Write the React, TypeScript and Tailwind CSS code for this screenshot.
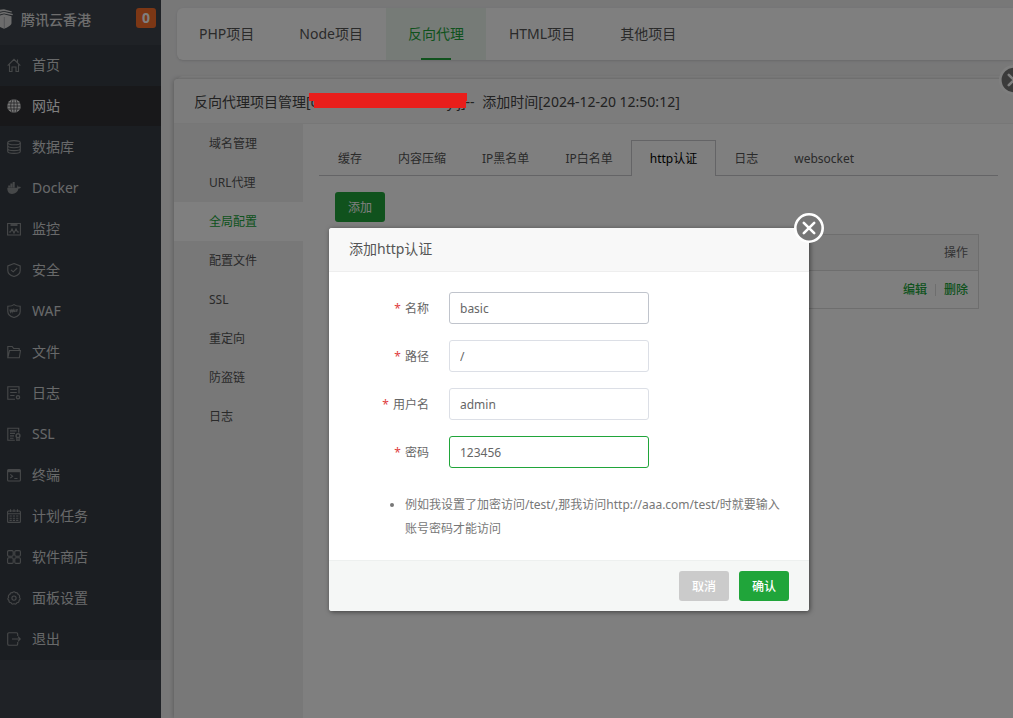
import { useState, type ReactNode } from 'react'

type IconKey =
  | 'home' | 'globe' | 'database' | 'docker' | 'monitor' | 'shield' | 'waf'
  | 'folder' | 'log' | 'ssl' | 'terminal' | 'calendar' | 'apps' | 'gear' | 'exit'

const ICONS: Record<IconKey, ReactNode> = {
  home: <path d="M.7 7.700 7 1.300l6.300 6.400M2.500 6.500v7H5V9h4v4.500h2.500v-7M10.500 1.500v3" />,
  globe: (
    <>
      <circle cx="7" cy="7" r="6.800" fill="currentColor" stroke="none" />
      <path
        d="M0 7h14M1 4h12M1 10h12M7 0v14M5 .6C3.300 4.500 3.300 9.500 5 13.400M9 .6c1.700 3.900 1.700 8.900 0 12.800"
        stroke="#323236"
        strokeWidth="0.7"
      />
    </>
  ),
  database: (
    <>
      <ellipse cx="7" cy="2.700" rx="6.300" ry="2.100" />
      <path d="M.7 2.700v8.600c0 1.200 2.800 2.100 6.300 2.100s6.300-.9 6.300-2.100V2.700M.7 5.600c0 1.200 2.800 2.100 6.300 2.100s6.300-.9 6.300-2.100M.7 8.500c0 1.200 2.800 2.100 6.300 2.100s6.300-.9 6.300-2.100" />
    </>
  ),
  docker: (
    <path
      d="M.3 6.800h9.500c.6-.4.7-1.400.3-2.600.9.3 1.400.9 1.500 1.700.8-.2 1.600 0 2.300.3-.4.9-1.200 1.400-2.300 1.400C10.600 11.300 8.300 13 5 13 1.800 13 .2 10.500.3 6.800ZM1.200 4.600h2v1.900h-2zM3.400 4.600h2v1.900h-2zM5.700 4.600h2v1.900h-2zM3.400 2.600h2v1.800h-2zM5.700 2.600h2v1.800h-2zM5.700 1h2v1.400h-2z"
      fill="currentColor"
      stroke="none"
    />
  ),
  monitor: (
    <>
      <path d="M.6 1.500h12.800v11.500H.6zM2 10h1.500L5 7l2 4 2-4 1.500 3H12" />
      <path d="M3.500 3h7" strokeWidth="1.800" />
    </>
  ),
  shield: <path d="M7 .6 13.200 3v4.500c0 2.700-2.700 5-6.200 6-3.500-1-6.200-3.300-6.200-6V3ZM4 6.800l2.200 2 4-3.800" />,
  waf: (
    <>
      <path d="M7 .6c1.500 1.200 3.800 1.700 6.200 1.700v5.200c0 2.700-2.700 5-6.200 6-3.500-1-6.200-3.300-6.200-6V2.300C3.200 2.300 5.500 1.800 7 .6Z" />
      <path d="m2.800 5.500.7 2.500.8-2 .8 2 .6-2.500M6 8l.9-2.500L7.800 8M9 8V5.700h2M9 7h1.500" />
    </>
  ),
  folder: <path d="M.8 12.800V1.500h4.400l1.500 2h5.500v2M.8 12.800l1.700-7.300h11l-1.200 7.300Z" />,
  log: (
    <>
      <path d="M12 7.500V.7H.8v12.600H8M3.200 3.500h6.600M3.200 6.500h6.600M3.200 9.500h4.300" />
      <circle cx="11" cy="11.200" r="1.600" strokeWidth="1.300" />
    </>
  ),
  ssl: (
    <>
      <path d="M11.700 5.500V1.200H.8v12h7M3 3.900h6.500M3 6.400h5M3 8.900h4M3 11.200h3.500" />
      <circle cx="11" cy="8.700" r="1.900" strokeWidth="1.400" />
      <path d="M9.800 10.600v3l1.200-.8 1.200.8v-3" />
    </>
  ),
  terminal: (
    <>
      <rect x=".6" y="1.500" width="12.800" height="11.500" rx="1" />
      <path d="M.6 3h12.800" strokeWidth="2.400" />
      <path d="m3.300 6.300 2.300 1.900-2.300 1.900M7.300 10.500h3.200" />
    </>
  ),
  calendar: (
    <>
      <rect x=".6" y="2" width="12.800" height="11.400" rx="1" />
      <path d="M.6 4.800h12.800M3.500.3V3M7 .3V3M10.500.3V3" />
      <path d="M2.500 7h9M2.500 9.200h9M2.500 11.400h9" strokeDasharray="2.300 1" />
    </>
  ),
  apps: (
    <>
      <rect x=".6" y=".6" width="5.600" height="5.600" rx="1.200" />
      <rect x="7.800" y=".6" width="5.600" height="5.600" rx="1.200" />
      <rect x=".6" y="7.800" width="5.600" height="5.600" rx="1.200" />
      <rect x="7.800" y="7.800" width="5.600" height="5.600" rx="1.200" />
    </>
  ),
  gear: (
    <>
      <path d="M5.500 1.700Q7-.2 8.500 1.700q2.400-.4 2.600 1.900 2.200.7 1.300 2.800 1.700 1.500-.3 2.800.2 2.400-2.200 2.500-1 2.200-2.900.9-2 1.300-2.900-.9-2.400-.1-2.200-2.500-2-1.300-.3-2.800-.9-2.100 1.300-2.800.2-2.300 2.600-1.900Z" />
      <circle cx="7" cy="7.100" r="2.100" />
    </>
  ),
  exit: <path d="M10.700 4V2A1.300 1.300 0 0 0 9.400.7H2A1.300 1.300 0 0 0 .7 2v10A1.300 1.300 0 0 0 2 13.300h7.400a1.300 1.300 0 0 0 1.300-1.300v-2M5 7h8.300M11 4.700 13.300 7 11 9.300" />,
}

const MENU: { label: string; icon: IconKey; active?: boolean }[] = [
  { label: '首页', icon: 'home' },
  { label: '网站', icon: 'globe', active: true },
  { label: '数据库', icon: 'database' },
  { label: 'Docker', icon: 'docker' },
  { label: '监控', icon: 'monitor' },
  { label: '安全', icon: 'shield' },
  { label: 'WAF', icon: 'waf' },
  { label: '文件', icon: 'folder' },
  { label: '日志', icon: 'log' },
  { label: 'SSL', icon: 'ssl' },
  { label: '终端', icon: 'terminal' },
  { label: '计划任务', icon: 'calendar' },
  { label: '软件商店', icon: 'apps' },
  { label: '面板设置', icon: 'gear' },
  { label: '退出', icon: 'exit' },
]

const PROJECT_TABS = ['PHP项目', 'Node项目', '反向代理', 'HTML项目', '其他项目']
const SIDE_TABS = ['域名管理', 'URL代理', '全局配置', '配置文件', 'SSL', '重定向', '防盗链', '日志']
const CONFIG_TABS = ['缓存', '内容压缩', 'IP黑名单', 'IP白名单', 'http认证', '日志', 'websocket']

const FIELDS = [
  { id: 'name', label: '名称', value: 'basic', border: 'border-[#c0c4cc]' },
  { id: 'path', label: '路径', value: '/', border: 'border-[#dcdfe6]' },
  { id: 'username', label: '用户名', value: 'admin', border: 'border-[#dcdfe6]' },
  { id: 'password', label: '密码', value: '123456', border: 'border-[#20a53a]' },
]

function CloseIcon() {
  return (
    <svg viewBox="0 0 30 30" className="size-[30px]" fill="none" stroke="#fff" strokeLinecap="round">
      <circle cx="15" cy="15" r="13.700" fill="#777" strokeWidth="2.600" />
      <path d="m9.800 9.800 10.400 10.400M20.200 9.800 9.800 20.200" strokeWidth="2.600" />
    </svg>
  )
}

function Sidebar() {
  return (
    <aside className="w-[161px] shrink-0 bg-[#3e454c]">
      <div className="flex h-[45px] items-start justify-between pt-2 pr-[5px]">
        <div className="flex items-center gap-2">
          <svg viewBox="0 0 13 20" className="h-5 w-[13px] text-[#d8d8d8]" fill="currentColor">
            <path d="M0 .8 4 .2l8 2.300-.5 1L4 2 0 2.800ZM0 3.800l4-1 9 2.200-.6 1.200L4 4.600 0 5.500ZM0 6.500l4-1.200 7.500 1.900V14c0 2.400-4 4.700-7.500 5.700L0 18Z" />
            <path d="M4.300 8v11" stroke="#8b9095" strokeWidth=".6" />
          </svg>
          <span className="pt-0.5 text-sm leading-5 font-medium text-[#dcdcdc]">腾讯云香港</span>
        </div>
        <span className="flex size-5 items-center justify-center rounded-[3px] bg-[#f96e2b] text-sm leading-5 font-bold text-white">
          0
        </span>
      </div>

      <nav>
        <ul className="bg-[#373d44]">
          {MENU.map(({ label, icon, active }) => (
            <li key={label} className="pb-px">
              <a
                href="#"
                className={`flex h-10 items-center gap-[11px] pl-[7px] text-sm ${
                  active ? 'bg-[#303034] text-white' : 'text-[#d0d2d4]'
                }`}
              >
                <svg
                  viewBox="0 0 14 14"
                  className={`size-3.5 ${active ? 'text-[#f0f0f0]' : 'text-[#8d9093]'}`}
                  fill="none"
                  stroke="currentColor"
                  strokeWidth="1.1"
                >
                  {ICONS[icon]}
                </svg>
                {label}
              </a>
            </li>
          ))}
        </ul>
      </nav>
    </aside>
  )
}

function ProjectTabs() {
  return (
    <nav className="mt-2 ml-4 flex h-[52px] gap-px rounded-l-md bg-white shadow-sm">
      {PROJECT_TABS.map((tab) => {
        const active = tab === '反向代理'
        return (
          <a
            key={tab}
            href="#"
            className={`flex flex-col items-center px-[22px] text-sm ${
              active ? 'bg-[#edf6ef] text-[#20a53a]' : 'text-[#555]'
            }`}
          >
            <span className="pt-px leading-[49px]">{tab}</span>
            {active && <span className="h-0.5 w-[30px] bg-[#20a53a]" />}
          </a>
        )
      })}
    </nav>
  )
}

function ProjectPanel() {
  return (
    <section className="absolute top-[79px] -right-0.5 bottom-0 left-[174px] flex flex-col rounded-tl bg-white shadow-[0_0_5px_rgba(0,0,0,0.3)]">
      <header className="flex h-[45px] items-center rounded-tl border-b border-[#eee] bg-[#f8f8f8] pt-0.5 pl-5 text-sm whitespace-pre text-[#444]">
        反向代理项目管理[
        {/* redacted domain */}
        <span className="relative flex w-[155px] justify-between">
          <span>c</span>
          <span>y.j]</span>
          <svg viewBox="0 0 158 15" className="absolute top-px -left-0.5 z-20 h-[15px] w-[158px]" fill="#e91e1b">
            <path d="M0 0h158v8h-1v7H5V8H0Z" />
          </svg>
        </span>
        <span className="pr-1">-- </span>
        添加时间[2024-12-20 12:50:12]
      </header>

      <div className="flex flex-1">
        <nav className="w-[129px] shrink-0 bg-[#f0f0f1]">
          {SIDE_TABS.map((tab) => (
            <a
              key={tab}
              href="#"
              className={`flex h-[39px] items-center pl-[35px] text-xs ${
                tab === '全局配置' ? 'bg-white text-[#20a53a]' : 'text-[#555]'
              }`}
            >
              {tab}
            </a>
          ))}
        </nav>

        <div className="min-w-0 flex-1 pt-4 pr-[17px] pl-4">
          <div role="tablist" className="flex h-9 border-b border-[#c8c9cc] pl-px">
            {CONFIG_TABS.map((tab) => (
              <button
                key={tab}
                type="button"
                role="tab"
                aria-selected={tab === 'http认证'}
                className={`px-[18px] text-xs whitespace-nowrap ${
                  tab === 'http认证'
                    ? '-mb-px border border-b-0 border-[#c8c9cc] bg-white text-black'
                    : 'pt-0.5 text-[#555]'
                }`}
              >
                {tab}
              </button>
            ))}
          </div>

          <div className="px-4 pt-4 pr-[19px]">
            <button type="button" className="h-[30px] w-[50px] rounded-[3px] bg-[#20a53a] pt-0.5 text-xs text-white">
              添加
            </button>
            <table className="mt-3 w-full border border-[#ddd] text-xs">
              <thead>
                <tr className="h-9 border-b border-[#ddd] bg-[#f6f6f6] text-[#666]">
                  <th className="px-2.5 text-right font-normal">操作</th>
                </tr>
              </thead>
              <tbody>
                <tr className="h-[38px]">
                  <td className="px-2.5">
                    <div className="flex items-center justify-end gap-2">
                      <a href="#" className="font-medium text-[#20a53a]">编辑</a>
                      <span className="h-3 w-px bg-[#ddd]" />
                      <a href="#" className="font-medium text-[#20a53a]">删除</a>
                    </div>
                  </td>
                </tr>
              </tbody>
            </table>
          </div>
        </div>
      </div>

      <button type="button" aria-label="关闭" className="absolute -top-3.5 -right-3.5">
        <CloseIcon />
      </button>
    </section>
  )
}

function AuthDialog() {
  const [values, setValues] = useState(FIELDS.map((f) => f.value))

  const update = (index: number, value: string) =>
    setValues((prev) => prev.map((v, i) => (i === index ? value : v)))

  return (
    <form
      role="dialog"
      aria-label="添加http认证"
      className="absolute top-[228px] left-[329px] z-30 w-[480px] rounded-[3px] bg-white shadow-[1px_1px_5px_rgba(0,0,0,0.5)]"
    >
      <h2 className="h-11 rounded-t-[3px] border-b border-[#eee] bg-[#f8f8f8] pl-5 text-sm leading-[41px] text-[#555]">
        添加http认证
      </h2>

      <div className="p-5">
        <div className="flex flex-col gap-4">
          {FIELDS.map((field, i) => (
            <div key={field.id} className="flex items-center gap-5">
              <label htmlFor={field.id} className="w-20 pt-0.5 text-right text-xs text-[#666]">
                <span className="mr-1 text-[#e04040]">*</span>
                {field.label}
              </label>
              <input
                id={field.id}
                type="text"
                value={values[i]}
                onChange={(e) => update(i, e.target.value)}
                className={`h-8 w-[200px] rounded-[3px] border px-2.5 text-xs text-[#666] outline-none ${field.border}`}
              />
            </div>
          ))}
        </div>

        <ul className="-mb-px mt-[25px] list-disc pl-14 text-xs leading-6 text-[#777]">
          <li>例如我设置了加密访问/test/,那我访问http://aaa.com/test/时就要输入账号密码才能访问</li>
        </ul>
      </div>

      <footer className="flex justify-end gap-2.5 rounded-b-[3px] border-t border-[#edf0ef] bg-[#f5f7f6] px-5 py-2.5">
        <button type="button" className="h-[30px] w-[50px] rounded-[3px] bg-[#cbcbcb] pt-0.5 text-xs font-medium text-white">
          取消
        </button>
        <button type="button" className="h-[30px] w-[50px] rounded-[3px] bg-[#20a53a] pt-0.5 text-xs font-medium text-white">
          确认
        </button>
      </footer>

      <button type="button" aria-label="关闭" className="absolute -top-[15px] -right-[15px]">
        <CloseIcon />
      </button>
    </form>
  )
}

export default function App() {
  return (
    <div className="relative flex h-screen overflow-hidden bg-[#f0f0f1] font-['Noto_Sans','Noto_Sans_CJK_SC',sans-serif]">
      <Sidebar />
      <main className="min-w-0 flex-1">
        <ProjectTabs />
        <div className="mt-4 ml-4 h-full rounded-tl-md bg-white" />
      </main>
      <ProjectPanel />
      <div className="absolute inset-0 z-10 bg-black/50" />
      <AuthDialog />
    </div>
  )
}
